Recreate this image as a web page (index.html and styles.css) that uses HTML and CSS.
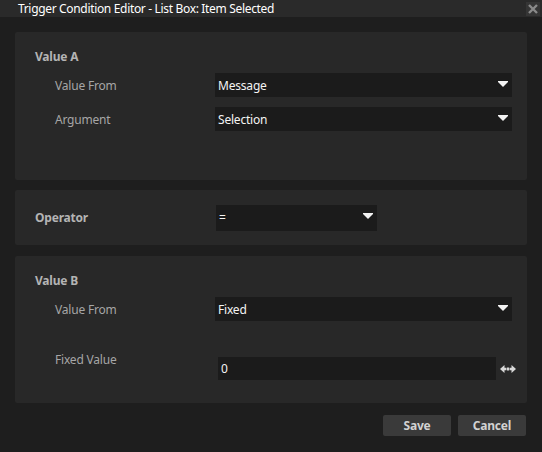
FILE: index.html
```html
<!DOCTYPE html>
<html>
<head>
<meta charset="utf-8">
<link rel="stylesheet" href="styles.css">
</head>
<body>
<div class="window">
  <div class="titlebar">
    <span class="title">Trigger Condition Editor - List Box: Item Selected</span>
    <span class="close"><svg width="10" height="10" viewBox="0 0 10 10"><path d="M1 1 L9 9 M9 1 L1 9" stroke="#8a8a8a" stroke-width="2.4" fill="none"/></svg></span>
  </div>
  <div class="content">
    <section class="panel panel-a">
      <div class="heading">Value A</div>
      <div class="row">
        <div class="label">Value From</div>
        <div class="select"><span>Message</span><svg class="arrow" width="10" height="6" viewBox="0 0 10 6"><polygon points="0,0 10,0 10,1 5,6 0,1" fill="#f2f2f2"/></svg></div>
      </div>
      <div class="row">
        <div class="label">Argument</div>
        <div class="select"><span>Selection</span><svg class="arrow" width="10" height="6" viewBox="0 0 10 6"><polygon points="0,0 10,0 10,1 5,6 0,1" fill="#f2f2f2"/></svg></div>
      </div>
    </section>
    <section class="panel panel-op">
      <div class="heading op-label">Operator</div>
      <div class="select select-op"><span>=</span><svg class="arrow" width="10" height="6" viewBox="0 0 10 6"><polygon points="0,0 10,0 10,1 5,6 0,1" fill="#f2f2f2"/></svg></div>
    </section>
    <section class="panel panel-b">
      <div class="heading">Value B</div>
      <div class="row">
        <div class="label">Value From</div>
        <div class="select"><span>Fixed</span><svg class="arrow" width="10" height="6" viewBox="0 0 10 6"><polygon points="0,0 10,0 10,1 5,6 0,1" fill="#f2f2f2"/></svg></div>
      </div>
      <div class="row row-fixed">
        <div class="label label-fixed">Fixed Value</div>
        <div class="input"><span>0</span></div>
        <svg class="drag" width="16" height="8" viewBox="0 0 16 8"><polygon points="0,4 4.5,0 4.5,2.8 6.5,2.8 6.5,5.2 4.5,5.2 4.5,8" fill="#d8d8d8"/><rect x="7" y="2.5" width="2" height="3" fill="#d8d8d8"/><polygon points="16,4 11.5,0 11.5,2.8 9.5,2.8 9.5,5.2 11.5,5.2 11.5,8" fill="#d8d8d8"/></svg>
      </div>
    </section>
    <div class="buttons">
      <button class="btn">Save</button>
      <button class="btn">Cancel</button>
    </div>
  </div>
</div>
</body>
</html>
```

FILE: styles.css
```css
html, body {
  margin: 0;
  padding: 0;
  background: #1e1e1e;
}
body {
  width: 542px;
  height: 452px;
  overflow: hidden;
  font-family: "Noto Sans", "Open Sans", sans-serif;
  font-size: 12px;
}
.titlebar {
  height: 17px;
  background: #2a2a2a;
  display: flex;
  align-items: center;
  justify-content: space-between;
  padding-left: 18px;
  padding-right: 2px;
}
.title {
  color: #ffffff;
  font-size: 12px;
  line-height: 17px;
  letter-spacing: -0.33px;
}
.close {
  width: 14px;
  height: 14px;
  background: #353535;
  display: flex;
  align-items: center;
  justify-content: center;
  margin-top: 1px;
}
.content {
  padding: 15px 15px 0 15px;
  display: flex;
  flex-direction: column;
}
.panel {
  background: #282828;
  border-radius: 2px;
  padding: 17px 15px 0 20px;
  box-sizing: border-box;
}
.panel-a {
  height: 148px;
}
.panel-op {
  margin-top: 10px;
  height: 55px;
  display: flex;
  align-items: center;
  padding-top: 0;
}
.panel-b {
  margin-top: 11px;
  height: 147px;
}
.heading {
  color: #b4b4b4;
  font-weight: bold;
  font-size: 12px;
  line-height: 16px;
  letter-spacing: -0.2px;
}
.row {
  display: flex;
  align-items: center;
  padding-left: 20px;
  margin-top: 8px;
}
.row + .row {
  margin-top: 10px;
}
.label {
  flex: none;
  width: 160px;
  color: #a6a6a6;
  line-height: 16px;
  letter-spacing: -0.2px;
  padding-top: 2px;
}
.label-fixed {
  padding-top: 0;
}
.select {
  flex: 1;
  height: 24px;
  background: #1b1b1b;
  display: flex;
  align-items: center;
  justify-content: space-between;
  padding: 0 4px 0 3px;
  box-sizing: border-box;
  color: #f4f4f4;
  letter-spacing: -0.2px;
}
.select .arrow {
  margin-top: -3px;
}
.op-label {
  flex: none;
  width: 181px;
}
.select-op {
  flex: none;
  width: 161px;
  height: 26px;
}
.row-fixed {
  align-items: flex-start;
  margin-right: -4px;
}
.panel-b .row.row-fixed {
  margin-top: 31px;
}
.input {
  flex: none;
  margin-left: 3px;
  margin-top: 5px;
  width: 278px;
  height: 23px;
  background: #1b1b1b;
  color: #f4f4f4;
  display: flex;
  align-items: center;
  padding-left: 3px;
  box-sizing: border-box;
}
.drag {
  flex: none;
  margin-left: 4px;
  margin-top: 13px;
}
.buttons {
  display: flex;
  justify-content: flex-end;
  gap: 7px;
  margin-top: 12px;
  padding-right: 1px;
}
.btn {
  width: 68px;
  height: 21px;
  border: none;
  border-radius: 2px;
  background: #3a3a3a;
  color: #d2d2d2;
  font-family: "Noto Sans", "Open Sans", sans-serif;
  font-size: 12px;
  font-weight: bold;
  padding: 0;
  letter-spacing: -0.2px;
}
```
